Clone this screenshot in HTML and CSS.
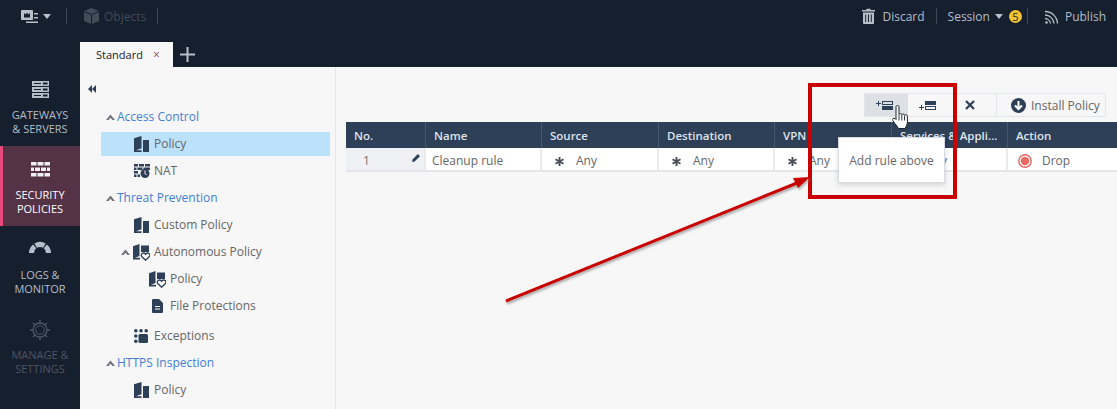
FILE: index.html
```html
<!DOCTYPE html>
<html lang="en">
<head>
<meta charset="utf-8">
<title>Policy</title>
<link rel="stylesheet" href="styles.css">
</head>
<body>
<svg class="defs" width="0" height="0" aria-hidden="true">
  <symbol id="i-book" viewBox="0 0 15 16">
    <path d="M0 2.300 7.500 0v12.300L2 14.300H7.500V16H0z" fill="#2e3f58"/>
    <rect x="9" y="4" width="6" height="12" fill="#2e3f58"/>
  </symbol>
  <symbol id="i-auto" viewBox="0 0 17 17">
    <path d="M0 2.300 6.500 0v12L2 13.700H7V15.500H0z" fill="#2e3f58"/>
    <path d="M8 1.500h8v6.500H8z" fill="#2e3f58"/>
    <path d="M12.600 16.200 8.800 12.500c-1.800-2.300 1.500-4.900 3.800-2.300 2.300-2.600 5.600 0 3.800 2.300z" fill="#f7f7f7" stroke="#2e3f58" stroke-width="1.300"/>
  </symbol>
  <symbol id="i-nat" viewBox="0 0 16 14">
    <path d="M0 0h4v2.500H0zM5 0h5v2.500H5zM11 0h5v2.500h-5zM0 3.500h2.500V6H0zM3.500 3.500h5V6h-5zM9.500 3.500H16V6H9.500zM0 7h4v2.500H0zM0 10.500h2.500V13H0zM3.500 10.500H6V13H3.500z" fill="#2e3f58"/>
    <circle cx="11" cy="9.500" r="4.500" fill="#2e3f58"/>
    <path d="M11 6.500v3l1.500 1.500" fill="none" stroke="#fff" stroke-width="1"/>
  </symbol>
  <symbol id="i-chev" viewBox="0 0 9 6">
    <path d="M0 6 4.500 .5 9 6H6.500L4.500 3.800 2.500 6z" fill="#6f7378"/>
  </symbol>
  <symbol id="i-star" viewBox="0 0 9 9">
    <path d="M4.500 0v9M.5 2.200l8 4.600M8.500 2.200l-8 4.600" stroke="#4a4f57" stroke-width="1.900" fill="none"/>
  </symbol>
</svg>

<div class="app">
  <header class="topbar">
    <div class="topgroup">
      <svg class="ic-menu" width="17" height="17" viewBox="0 0 17 17"><path d="M0 3a1 1 0 0 1 1-1h10a1 1 0 0 1 1 1v8a1 1 0 0 1-1 1H1a1 1 0 0 1-1-1z" fill="#b9c0ca"/><path d="M3 9.500V5l1.700 1.500L6 4.500l1.300 2L9 5v4.500z" fill="#161f2d"/><path d="M13 5h4v1.500h-4zM13 9h4v1.500h-4zM5 13.500h12V15H5z" fill="#b9c0ca"/></svg>
      <span class="caret"></span>
      <span class="vsep sep-a"></span>
      <svg class="ic-cube" width="15" height="16" viewBox="0 0 15 16"><path d="M7.500 0 15 3 7.500 6 0 3z" fill="#434c59"/><path d="M0 4l7 2.800V16l-7-3zM15 4 8 6.800V16l7-3z" fill="#434c59"/></svg>
      <span class="obj">Objects</span>
      <span class="vsep sep-b"></span>
    </div>
    <div class="topgroup">
      <svg width="13" height="16" viewBox="0 0 13 16"><path d="M4.500 2V.8h4V2H13v1.500H0V2z" fill="#b9c0ca"/><path d="M1 4.500h11V15a1 1 0 0 1-1 1H2a1 1 0 0 1-1-1z" fill="#b9c0ca"/><path d="M3.700 6.500v7.500M6.500 6.500v7.500M9.300 6.500v7.500" stroke="#161f2d"/></svg>
      <span class="toptext t-discard">Discard</span>
      <span class="vsep sep-c"></span>
      <span class="toptext t-session">Session</span>
      <span class="caret caret-s"></span>
      <span class="badge">5</span>
      <span class="vsep sep-d"></span>
      <svg class="ic-rss" width="15" height="15" viewBox="0 0 15 15" fill="none" stroke="#b9c0ca"><path d="M0 2.500c7 0 12 5 12.500 12" stroke-width="1.300"/><path d="M0 6c4.500 0 8.500 3.500 9 8.500" stroke-width="1.300"/><path d="M0 9.500c2.500 0 5 2 5.500 5" stroke-width="1.300"/><circle cx="1.500" cy="13.500" r="1.300" fill="#b9c0ca" stroke="none"/></svg>
      <span class="toptext t-publish">Publish</span>
    </div>
  </header>

  <div class="tabbar">
    <div class="tab"><span>Standard</span><span class="tab-x">×</span></div>
    <svg class="tab-plus" width="15" height="15" viewBox="0 0 15 15"><path d="M7.500 0v15M0 7.500h15" stroke="#b9c0ca" stroke-width="2"/></svg>
  </div>

  <div class="workspace">
    <nav class="sidebar">
      <div class="nav-item">
        <svg class="nav-icon ni-gw" width="17" height="17" viewBox="0 0 17 17"><g fill="#b4bdca"><rect width="17" height="5"/><rect y="6" width="17" height="5"/><rect y="12" width="17" height="5"/></g><path d="M2 2h7v1H2zM2 8h7v1H2zM2 14h7v1H2z" fill="#161f2d"/><g fill="#161f2d"><rect x="11" y="1.500" width="4.500" height="2"/><rect x="11" y="7.500" width="4.500" height="2"/><rect x="11" y="13.500" width="4.500" height="2"/></g></svg>
        <span>GATEWAYS<br>&amp; SERVERS</span>
      </div>
      <div class="nav-item active">
        <svg class="nav-icon ni-sec" width="19" height="15" viewBox="0 0 19 15"><path d="M0 0h5.500v3.500H0zM6.500 0h6v3.500h-6zM13.500 0H19v3.500h-5.500zM0 5.500h3v3.500H0zM4 5.500h5v3.500H4zM10 5.500h5v3.500h-5zM16 5.500h3v3.500h-3zM0 11h5.500v3.500H0zM6.500 11h6v3.500h-6zM13.500 11H19v3.500h-5.500z" fill="#eef0f5"/></svg>
        <span>SECURITY<br>POLICIES</span>
      </div>
      <div class="nav-item">
        <svg class="nav-icon ni-log" width="22" height="13" viewBox="0 0 22 13"><path d="M2.500 13A8.500 8.500 0 0 1 5.650 6.400M6.620 5.710A8.500 8.500 0 0 1 15.380 5.710M16.350 6.400A8.500 8.500 0 0 1 19.500 13" fill="none" stroke="#b4bdca" stroke-width="5"/></svg>
        <span>LOGS &amp;<br>MONITOR</span>
      </div>
      <div class="nav-item muted">
        <svg class="nav-icon ni-set" width="20" height="20" viewBox="0 0 20 20" fill="none" stroke="#4c5563"><circle cx="10" cy="10" r="7" stroke-width="1.300"/><circle cx="10" cy="10" r="4.300" stroke-width="1"/><path d="M10 0v3M10 17v3M0 10h3M17 10h3M3 3l2 2M15 15l2 2M17 3l-2 2M5 15l-2 2" stroke-width="1.500"/></svg>
        <span>MANAGE &amp;<br>SETTINGS</span>
      </div>
    </nav>

    <aside class="tree">
      <svg class="collapse" width="8" height="8" viewBox="0 0 8 8"><path d="M4 0v8L0 4zM8 0v8L4 4z" fill="#2e3f58"/></svg>
      <div class="tree-row lvl0"><svg class="chev" width="9" height="6"><use href="#i-chev"/></svg><span class="head-link">Access Control</span></div>
      <div class="tree-row lvl1 selected"><svg class="ti" width="15" height="16"><use href="#i-book"/></svg><span>Policy</span></div>
      <div class="tree-row lvl1"><svg class="ti ti-nat" width="16" height="14"><use href="#i-nat"/></svg><span>NAT</span></div>
      <div class="tree-row lvl0"><svg class="chev" width="9" height="6"><use href="#i-chev"/></svg><span class="head-link">Threat Prevention</span></div>
      <div class="tree-row lvl1"><svg class="ti" width="15" height="16"><use href="#i-book"/></svg><span>Custom Policy</span></div>
      <div class="tree-row lvl1 has-chev"><svg class="chev" width="9" height="6"><use href="#i-chev"/></svg><svg class="ti" width="17" height="17"><use href="#i-auto"/></svg><span>Autonomous Policy</span></div>
      <div class="tree-row lvl2"><svg class="ti" width="17" height="17"><use href="#i-auto"/></svg><span>Policy</span></div>
      <div class="tree-row lvl2 file"><svg class="ti" width="11" height="14" viewBox="0 0 11 14"><path d="M1 0h6l4 4v9a1 1 0 0 1-1 1H1a1 1 0 0 1-1-1V1a1 1 0 0 1 1-1z" fill="#2e3f58"/><path d="M3 7.500h5M3 10h5" stroke="#fff"/></svg><span>File Protections</span></div>
      <div class="tree-row lvl1 exc"><svg class="ti ti-exc" width="14" height="14" viewBox="0 0 14 14"><g fill="#2e3f58"><circle cx="1.800" cy="1.800" r="1.800"/><circle cx="7" cy="1.800" r="1.800"/><circle cx="12.200" cy="1.800" r="1.800"/><circle cx="1.800" cy="7" r="1.800"/><circle cx="1.800" cy="12.200" r="1.800"/><rect x="4.500" y="5" width="9.500" height="9" rx="1.500"/></g></svg><span>Exceptions</span></div>
      <div class="tree-row lvl0"><svg class="chev" width="9" height="6"><use href="#i-chev"/></svg><span class="head-link">HTTPS Inspection</span></div>
      <div class="tree-row lvl1"><svg class="ti" width="15" height="16"><use href="#i-book"/></svg><span>Policy</span></div>
    </aside>

    <main class="main">
      <div class="toolbar">
        <button class="tbtn on"><svg width="17" height="9" viewBox="0 0 17 9"><path d="M0 2.500h5M2.500 0v5" stroke="#2e3f58"/><rect x="6.500" y=".5" width="10" height="3" fill="none" stroke="#2e3f58"/><rect x="6" y="5" width="11" height="4" fill="#2e3f58"/></svg></button>
        <button class="tbtn b2"><svg width="17" height="9" viewBox="0 0 17 9"><path d="M0 6.500h5M2.500 4v5" stroke="#2e3f58"/><rect x="6" y="0" width="11" height="4" fill="#2e3f58"/><rect x="6.500" y="5.500" width="10" height="3" fill="none" stroke="#2e3f58"/></svg></button>
        <button class="tbtn b3"><svg width="10" height="10" viewBox="0 0 10 10"><path d="M1 1l8 8M9 1l-8 8" stroke="#2e3f58" stroke-width="2.200"/></svg></button>
        <button class="tbtn install"><svg width="15" height="15" viewBox="0 0 15 15"><circle cx="7.500" cy="7.500" r="7.500" fill="#2e3f58"/><path d="M7.500 3v8M4 7.500l3.500 3.500L11 7.500" fill="none" stroke="#fff" stroke-width="2"/></svg><span>Install Policy</span></button>
      </div>
      <table class="rules">
        <colgroup><col class="c-no"><col class="c-name"><col class="c-src"><col class="c-dst"><col class="c-vpn"><col class="c-svc"><col class="c-act"></colgroup>
        <thead>
          <tr><th>No.</th><th>Name</th><th>Source</th><th>Destination</th><th>VPN</th><th>Services &amp; Appli...</th><th>Action</th></tr>
        </thead>
        <tbody>
          <tr>
            <td class="num"><span>1</span><svg class="pencil" width="8" height="8" viewBox="0 0 8 8"><path d="M0 8l.6-2.600L5.800 0 8 2.200 2.600 7.400z" fill="#2e3f58"/></svg></td>
            <td class="nm">Cleanup rule</td>
            <td><svg width="9" height="9"><use href="#i-star"/></svg><span class="any">Any</span></td>
            <td><svg width="9" height="9"><use href="#i-star"/></svg><span class="any">Any</span></td>
            <td><svg width="9" height="9"><use href="#i-star"/></svg><span class="any">Any</span></td>
            <td><svg width="9" height="9"><use href="#i-star"/></svg><span class="any">Any</span></td>
            <td class="act"><svg width="14" height="14" viewBox="0 0 14 14"><circle cx="7" cy="7" r="6.200" fill="none" stroke="#e8645f" stroke-width="1.400"/><circle cx="7" cy="7" r="4.200" fill="#ea6a65"/></svg><span>Drop</span></td>
          </tr>
        </tbody>
      </table>
    </main>
  </div>

  <div class="tooltip">Add rule above</div>
  <div class="redbox"></div>
  <svg class="arrow" width="1117" height="409" viewBox="0 0 1117 409">
    <g class="arrow-shadow"><path d="M506 301 797 183" stroke="#8c8c8c" stroke-width="3"/><path d="M810 177 793 178 798 188z" fill="#8c8c8c"/></g>
    <path d="M506 301 797 183" stroke="#c80000" stroke-width="3"/>
    <path d="M810 177 793 178 798 188z" fill="#c80000"/>
  </svg>
  <svg class="cursor" width="18" height="24" viewBox="0 0 18 24"><path d="M4 2c0-2 3-2 3 0v7.500c.4-1.200 2.600-1.200 2.800.2.500-1 2.500-.8 2.700.4.600-.8 2.700-.5 2.800.9l.2 5c0 3-1 5-2.500 7.500H6.500c-1.200-2-2-3-3.500-4.800L.8 15.500c-1-1.500.8-3 2.200-1.900l1 1z" fill="#fff" stroke="#1d2430" stroke-width="1"/><path d="M7 10v5.500M9.800 10v5.500M12.500 10.500v5" stroke="#1d2430" stroke-width=".9"/></svg>
</div>
</body>
</html>
```

FILE: styles.css
```css
* { box-sizing: border-box; }
html, body { margin: 0; padding: 0; }
body {
  width: 1117px;
  height: 409px;
  overflow: hidden;
  font-family: "Open Sans", "Noto Sans", sans-serif;
  font-size: 12px;
  color: #666;
  background: #161f2d;
}
.defs { position: absolute; }
.app {
  position: relative;
  width: 1117px;
  height: 409px;
  display: flex;
  flex-direction: column;
  overflow: hidden;
}

/* top bar */
.topbar {
  height: 42px;
  padding: 0 11px 10px 21px;
  display: flex;
  align-items: center;
  justify-content: space-between;
  flex: none;
}
.topgroup { display: flex; align-items: center; }
.toptext { color: #b4bdca; }
.caret {
  width: 0; height: 0;
  margin-left: 5px;
  border-left: 4px solid transparent;
  border-right: 4px solid transparent;
  border-top: 5px solid #b9c0ca;
}
.vsep { width: 1px; height: 16px; background: #3f4856; }
.sep-a { margin: 0 17px 0 15px; }
.ic-cube { margin-right: 5px; }
.obj { color: #3f4a5a; }
.sep-b { margin-left: 11px; }
.t-discard { margin-left: 7px; }
.sep-c { margin: 0 11px 0 11px; }
.caret-s { margin-left: 5px; }
.badge {
  width: 13px; height: 13px;
  margin-left: 6px;
  border-radius: 50%;
  background: #f5c231;
  color: #161f2d;
  font-size: 11px;
  line-height: 13px;
  text-align: center;
}
.sep-d { margin: 0 17px 0 5px; }
.t-publish { margin-left: 5px; }

/* tabs */
.tabbar {
  height: 25px;
  flex: none;
  padding-left: 80px;
  display: flex;
  align-items: center;
}
.tab {
  width: 93px;
  height: 25px;
  padding-left: 16px;
  background: #f7f7f7;
  color: #222;
  font-size: 11px;
  line-height: 25px;
  display: flex;
}
.tab-x { margin-left: 10px; color: #8a4a5a; font-size: 12px; }
.tab-plus { margin-left: 7px; }

/* workspace */
.workspace { flex: 1; display: flex; min-height: 0; background: #f7f7f7; }
.sidebar { width: 80px; flex: none; background: #161f2d; }
.nav-item {
  height: 80px;
  padding-top: 14px;
  display: flex;
  flex-direction: column;
  align-items: center;
  text-align: center;
  color: #b4bdca;
  font-size: 11px;
  line-height: 14px;
}
.nav-item:first-child { height: 79px; padding-top: 13px; }
.nav-icon { flex: none; display: block; }
.ni-gw { margin: 1px 0 10px; }
.ni-sec { margin: 2px 0 11px; }
.ni-log { margin: 0 0 15px; }
.ni-set { margin: 0 0 8px; }
.nav-item.active {
  background: #553347;
  box-shadow: inset 3px 0 0 #e8487c;
  color: #fff;
}
.nav-item.muted { color: #4c5563; }

/* tree */
.tree {
  width: 256px;
  flex: none;
  padding: 38px 5px 0 21px;
  border-right: 1px solid #e6e6e6;
  display: flex;
  flex-direction: column;
  gap: 3px;
  position: relative;
}
.collapse { position: absolute; left: 8px; top: 18px; }
.tree-row {
  height: 24px;
  display: flex;
  align-items: center;
}
.tree-row span { margin-bottom: 1px; }
.chev { flex: none; margin-right: 2px; }
.head-link { color: #3f7ed4; }
.lvl0 { padding-left: 5px; }
.lvl1 { padding-left: 33px; }
.ti { flex: none; margin-right: 5px; }
.ti-nat { margin-right: 4px; }
.ti-exc { margin-right: 6px; }
.has-chev { padding-left: 20px; }
.has-chev .chev { margin-right: 3px; }
.has-chev .ti { margin-right: 4px; }
.lvl2 { padding-left: 48px; }
.lvl2 .ti { margin-right: 4px; }
.lvl2.file { padding-left: 51px; }
.lvl2.file .ti { margin-right: 7px; }
.selected { background: #bbe1fb; }
.exc { margin-top: 3px; }

/* main */
.main { flex: 1; min-width: 0; padding: 26px 0 0 10px; }
.toolbar {
  width: 242px;
  height: 24px;
  margin: 0 11px 5px auto;
  border: 1px solid #e3e6ea;
  display: flex;
}
.tbtn {
  border: 0;
  padding: 0;
  background: none;
  font: inherit;
  color: #666;
  display: flex;
  align-items: center;
  height: 22px;
}
.tbtn.on { width: 43px; padding-left: 11px; background: #dde0e5; }
.b2 { width: 42px; padding-left: 11px; }
.b3 { width: 47px; padding-left: 15px; border-right: 1px solid #e3e6ea; }
.install { flex: 1; gap: 5px; padding-left: 14px; }

.rules {
  width: 771px;
  border-collapse: separate;
  border-spacing: 0;
  table-layout: fixed;
}
.c-no { width: 80px; }
.c-name { width: 116px; }
.c-src { width: 117px; }
.c-dst { width: 116px; }
.c-vpn { width: 117px; }
.c-svc { width: 116px; }
.c-act { width: 109px; }
.rules th {
  height: 26px;
  padding: 0 0 0 8px;
  background: #2e3f58;
  border-right: 1px solid #46566e;
  color: #dfe4ea;
  font-size: 11.500px;
  font-weight: 600;
  text-align: left;
  white-space: nowrap;
  overflow: hidden;
}
.rules th:last-child { border-right: 0; }
.rules td {
  height: 24px;
  padding: 2px 0 0 13px;
  background: #fff;
  border-right: 2px solid #e8eaee;
  border-bottom: 2px solid #e4e6eb;
  white-space: nowrap;
}
.rules td:last-child { border-right: 0; }
.rules td svg { vertical-align: -1px; }
.rules td.num {
  position: relative;
  background: #f0f1f4;
  padding-left: 17px;
  color: #777;
}
.pencil { position: absolute; right: 4px; top: 6px; }
.rules td.nm { padding-left: 6px; }
.any { margin-left: 12px; }
.rules td.act { padding-left: 10px; }
.rules td.act svg { vertical-align: -3px; }
.act span { margin-left: 10px; }

/* overlays */
.tooltip {
  position: absolute;
  left: 838px;
  top: 137px;
  width: 107px;
  height: 46px;
  background: #fff;
  border: 1px solid #d7dae3;
  box-shadow: 0 2px 5px rgba(0,0,0,.15);
  color: #666;
  line-height: 46px;
  text-align: center;
}
.redbox {
  position: absolute;
  left: 808px;
  top: 83px;
  width: 149px;
  height: 116px;
  border: 4px solid #c80000;
}
.arrow { position: absolute; left: 0; top: 0; }
.arrow-shadow { transform: translate(1px, 2px); filter: blur(1px); opacity: .7; }
.cursor { position: absolute; left: 892px; top: 105px; }
```
